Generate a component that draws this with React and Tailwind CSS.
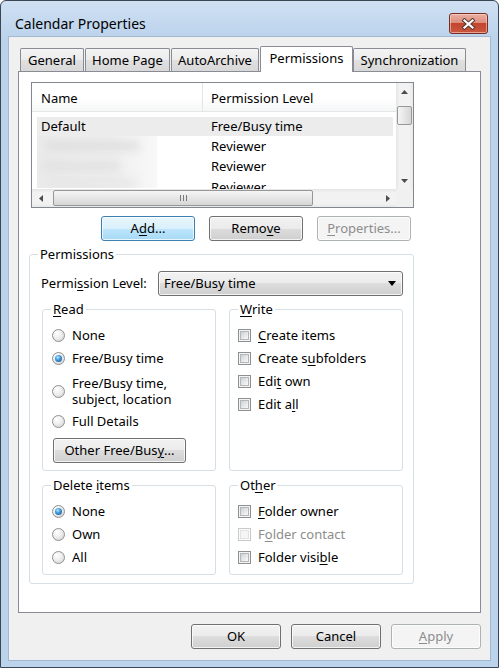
import React from "react";

const U = ({ children }) => (
  <span className="underline decoration-1 underline-offset-[2px]">{children}</span>
);

function Btn({ children, className = "", variant = "normal" }) {
  const styles =
    variant === "default"
      ? "border-[#3c7fb1] bg-[linear-gradient(180deg,#eaf6fd_0%,#d9f0fc_50%,#bee6fd_50%,#a7d9f5_100%)] text-black"
      : variant === "disabled"
      ? "border-[#adb2b5] bg-[#f4f4f4] text-[#8d8d8d]"
      : "border-[#707070] bg-[linear-gradient(180deg,#f2f2f2_0%,#ebebeb_50%,#dddddd_50%,#cfcfcf_100%)] text-black";
  return (
    <div
      className={`h-[25px] shrink-0 rounded-[3px] border shadow-[inset_0_0_0_1px_rgba(255,255,255,0.75)] flex items-center justify-center ${styles} ${className}`}
    >
      {children}
    </div>
  );
}

function Radio({ checked }) {
  return (
    <div className="w-[13px] h-[13px] shrink-0 rounded-full border border-[#8e8f8f] bg-[radial-gradient(circle_at_35%_30%,#ffffff_0%,#eeeeee_45%,#cfcfcf_100%)] flex items-center justify-center">
      {checked && (
        <div className="w-[7px] h-[7px] rounded-full bg-[radial-gradient(circle_at_40%_35%,#bfeaff_0%,#3e9be0_40%,#0d4f8c_100%)]" />
      )}
    </div>
  );
}

function Check({ disabled }) {
  return (
    <div
      className={`w-[13px] h-[13px] shrink-0 border p-[1px] ${
        disabled ? "border-[#c9c9c9] bg-[#fbfbfb]" : "border-[#8e8f8f] bg-[#f4f4f4]"
      }`}
    >
      <div
        className={`w-full h-full border ${
          disabled
            ? "border-[#e3e3e3] bg-[#f5f5f5]"
            : "border-[#b3b6ba] bg-[linear-gradient(135deg,#cdd0d4_0%,#e9eaec_60%,#f8f8f8_100%)]"
        }`}
      />
    </div>
  );
}

function Tab({ children, selected, className = "" }) {
  if (selected) {
    return (
      <div
        className={`relative z-10 -mb-[1px] h-[26px] border border-b-0 border-[#898c95] rounded-t-[2px] bg-white flex items-center justify-center pb-[2px] ${className}`}
      >
        {children}
      </div>
    );
  }
  return (
    <div
      className={`h-[23px] border border-b-0 border-[#898c95] rounded-t-[2px] bg-[linear-gradient(180deg,#f4f4f4_0%,#ececec_50%,#e0e0e0_50%,#d8d8d8_100%)] flex items-center justify-center pt-[1px] ${className}`}
    >
      {children}
    </div>
  );
}

function Group({ label, className = "", children }) {
  return (
    <fieldset className={`border border-[#d5dfe5] rounded-[3px] ${className}`}>
      <legend className="ml-[8px] px-[2px] leading-[16px]">{label}</legend>
      {children}
    </fieldset>
  );
}

function CloseBtn() {
  return (
    <div className="w-[39px] h-[21px] rounded-[3px] border border-[#7a2d24] bg-[linear-gradient(180deg,#e9b0a3_0%,#dc8f7d_45%,#c4442d_50%,#c9593f_100%)] shadow-[inset_0_0_0_1px_rgba(255,220,210,0.55)] flex items-center justify-center">
      <svg width="15" height="12" viewBox="0 0 15 12">
        <path d="M3.5 2.5 L11.5 9.5 M11.5 2.5 L3.5 9.5" stroke="#5a3a36" strokeWidth="4.2" strokeLinecap="square" />
        <path d="M3.5 2.5 L11.5 9.5 M11.5 2.5 L3.5 9.5" stroke="#ffffff" strokeWidth="2.2" strokeLinecap="square" />
      </svg>
    </div>
  );
}

function ArrowUp() {
  return (
    <svg width="7" height="4" viewBox="0 0 7 4">
      <path d="M0 4 L3.5 0 L7 4 Z" fill="#4d4d4d" />
    </svg>
  );
}
function ArrowDown() {
  return (
    <svg width="7" height="4" viewBox="0 0 7 4">
      <path d="M0 0 L3.5 4 L7 0 Z" fill="#4d4d4d" />
    </svg>
  );
}
function ArrowLeft() {
  return (
    <svg width="4" height="7" viewBox="0 0 4 7">
      <path d="M4 0 L0 3.5 L4 7 Z" fill="#4d4d4d" />
    </svg>
  );
}
function ArrowRight() {
  return (
    <svg width="4" height="7" viewBox="0 0 4 7">
      <path d="M0 0 L4 3.5 L0 7 Z" fill="#4d4d4d" />
    </svg>
  );
}

function ListView() {
  return (
    <div className="ml-[12px] mt-[10px] w-[383px] h-[126px] border border-[#828790] flex flex-col bg-white">
      <div className="flex h-[106px]">
        <div className="flex-1 flex flex-col overflow-hidden">
          <div className="h-[29px] shrink-0 flex border-b border-[#e5e5e5] bg-[linear-gradient(180deg,#ffffff_0%,#ffffff_55%,#f5f6f7_100%)]">
            <div className="w-[171px] pl-[9px] pt-[3px] flex items-center border-r border-[#e5e5e5]">Name</div>
            <div className="pl-[8px] pt-[3px] flex items-center">Permission Level</div>
          </div>
          <div className="flex-1 overflow-hidden">
            <div className="mt-[5px] ml-[5px] mr-[3px] h-[19px] bg-[#ececec] flex items-center">
              <div className="w-[166px] pl-[4px]">Default</div>
              <div className="pl-[8px]">Free/Busy time</div>
            </div>
            <div className="flex ml-[5px]">
              <div className="w-[166px]">
                <div className="w-[120px] h-[52px] overflow-hidden bg-[linear-gradient(90deg,#ebebeb_0%,#efefef_60%,#f8f8f8_100%)]">
                  <div className="mt-[6px] ml-[8px] w-[95px] h-[8px] rounded-full bg-[#dcdcdc] blur-[5px]" />
                  <div className="mt-[12px] ml-[4px] w-[80px] h-[8px] rounded-full bg-[#dfdfdf] blur-[5px]" />
                  <div className="mt-[10px] ml-[10px] w-[90px] h-[6px] rounded-full bg-[#e2e2e2] blur-[5px]" />
                </div>
              </div>
              <div className="flex flex-col pl-[8px]">
                <div className="h-[20px] flex items-center">Reviewer</div>
                <div className="h-[20px] flex items-center">Reviewer</div>
                <div className="h-[20px] flex items-center pt-[2px]">Reviewer</div>
              </div>
            </div>
          </div>
        </div>
        <div className="w-[17px] shrink-0 flex flex-col bg-[linear-gradient(90deg,#e5e5e5_0%,#f2f2f2_20%,#f2f2f2_80%,#e8e8e8_100%)]">
          <div className="h-[17px] flex items-center justify-center">
            <ArrowUp />
          </div>
          <div className="mt-[6px] mx-[1px] h-[19px] rounded-[2px] border border-[#979797] bg-[linear-gradient(90deg,#f5f5f5_0%,#e6e6e6_50%,#d6d6d6_100%)]" />
          <div className="flex-1" />
          <div className="h-[17px] flex items-center justify-center">
            <ArrowDown />
          </div>
        </div>
      </div>
      <div className="flex h-[18px]">
        <div className="flex-1 flex items-stretch bg-[linear-gradient(180deg,#e5e5e5_0%,#f2f2f2_20%,#f2f2f2_80%,#e8e8e8_100%)]">
          <div className="w-[17px] flex items-center justify-center">
            <ArrowLeft />
          </div>
          <div className="ml-[4px] my-[1px] w-[260px] rounded-[2px] border border-[#979797] bg-[linear-gradient(180deg,#f5f5f5_0%,#e6e6e6_50%,#d6d6d6_100%)] flex items-center justify-center gap-[2px]">
            <div className="w-[1px] h-[6px] bg-[#7a7a7a]" />
            <div className="w-[1px] h-[6px] bg-[#7a7a7a]" />
            <div className="w-[1px] h-[6px] bg-[#7a7a7a]" />
          </div>
          <div className="flex-1" />
          <div className="w-[17px] flex items-center justify-center">
            <ArrowRight />
          </div>
        </div>
        <div className="w-[17px] bg-[#f0f0f0]" />
      </div>
    </div>
  );
}

function RadioRow({ checked, children }) {
  return (
    <div className="h-[23px] flex items-center gap-[7px] pl-[9px]">
      <Radio checked={checked} />
      <span>{children}</span>
    </div>
  );
}

function CheckRow({ disabled, children }) {
  return (
    <div className={`h-[23px] flex items-center gap-[7px] pl-[8px] ${disabled ? "text-[#8d8d8d]" : ""}`}>
      <Check disabled={disabled} />
      <span>{children}</span>
    </div>
  );
}

export default function App() {
  return (
    <div className="w-[500px] h-[670px] bg-white font-['Noto_Sans','Open_Sans',sans-serif] text-[13px] text-black leading-none">
      <div className="w-[499px] h-[668px] rounded-t-[6px] border border-[#3a4653] bg-[linear-gradient(180deg,#cfe0f3_0px,#bcd3ec_36px,#bcd3ec_100%)] flex flex-col">
        <div className="h-[35px] shrink-0 pt-[12px] pl-[14px] pr-[10px] flex items-start justify-between">
          <div className="h-[21px] flex items-center text-[14px]">Calendar Properties</div>
          <CloseBtn />
        </div>
        <div className="mx-[7px] mb-[6px] flex-1 border border-[#a4b9d0] bg-[#f0f0f0] px-[9px] pt-[9px] flex flex-col">
          <div className="h-[25px] shrink-0 pl-[2px] flex items-end">
            <Tab className="w-[64px]">General</Tab>
            <Tab className="w-[85px] ml-[1px]">Home Page</Tab>
            <Tab className="w-[88px] ml-[1px]">AutoArchive</Tab>
            <Tab selected className="w-[93px] ml-[1px]">Permissions</Tab>
            <Tab className="w-[113px]">Synchronization</Tab>
          </div>
          <div className="h-[542px] shrink-0 border border-[#898c95] bg-white flex flex-col">
            <ListView />
            <div className="mt-[8px] ml-[82px] flex gap-[14px]">
              <Btn variant="default" className="w-[94px]">
                A<U>d</U>d...
              </Btn>
              <Btn className="w-[94px]">
                Remo<U>v</U>e
              </Btn>
              <Btn variant="disabled" className="w-[94px]">
                <U>P</U>roperties...
              </Btn>
            </div>
            <Group label="Permissions" className="mt-[5px] ml-[10px] w-[385px] h-[338px]">
              <div className="mt-[9px] h-[25px] flex items-center pl-[11px]">
                <div className="w-[117px]">
                  Permi<U>s</U>sion Level:
                </div>
                <div className="w-[245px] h-[25px] rounded-[3px] border border-[#707070] bg-[linear-gradient(180deg,#f2f2f2_0%,#ebebeb_50%,#dddddd_50%,#cfcfcf_100%)] shadow-[inset_0_0_0_1px_rgba(255,255,255,0.75)] flex items-center justify-between pl-[5px] pr-[6px]">
                  <span>Free/Busy time</span>
                  <svg width="8" height="5" viewBox="0 0 8 5">
                    <path d="M0 0 L8 0 L4 5 Z" fill="#000" />
                  </svg>
                </div>
              </div>
              <div className="mt-[5px] pl-[12px] grid grid-cols-[174px_174px] gap-x-[13px] gap-y-[6px]">
                <Group label={<><U>R</U>ead</>} className="h-[170px]">
                  <div className="pt-[7px]">
                    <RadioRow>None</RadioRow>
                    <RadioRow checked>Free/Busy time</RadioRow>
                    <div className="h-[40px] pt-[5px] pb-[3px] flex items-center gap-[7px] pl-[9px]">
                      <Radio />
                      <div className="leading-[16px]">
                        <div>Free/Busy time,</div>
                        <div>subject, location</div>
                      </div>
                    </div>
                    <RadioRow>Full Details</RadioRow>
                    <Btn className="mt-[5px] ml-[10px] w-[133px]">
                      Other Free/Bus<U>y</U>...
                    </Btn>
                  </div>
                </Group>
                <Group label={<><U>W</U>rite</>} className="h-[170px]">
                  <div className="pt-[7px]">
                    <CheckRow>
                      <U>C</U>reate items
                    </CheckRow>
                    <CheckRow>
                      Create s<U>u</U>bfolders
                    </CheckRow>
                    <CheckRow>
                      Edi<U>t</U> own
                    </CheckRow>
                    <CheckRow>
                      Edit a<U>l</U>l
                    </CheckRow>
                  </div>
                </Group>
                <Group label={<>Delete <U>i</U>tems</>} className="h-[98px]">
                  <div className="pt-[7px]">
                    <RadioRow checked>None</RadioRow>
                    <RadioRow>Own</RadioRow>
                    <RadioRow>All</RadioRow>
                  </div>
                </Group>
                <Group label={<>Ot<U>h</U>er</>} className="h-[98px]">
                  <div className="pt-[7px]">
                    <CheckRow>
                      <U>F</U>older owner
                    </CheckRow>
                    <CheckRow disabled>
                      F<U>o</U>lder contact
                    </CheckRow>
                    <CheckRow>
                      Folder visi<U>b</U>le
                    </CheckRow>
                  </div>
                </Group>
              </div>
            </Group>
          </div>
          <div className="mt-[11px] flex justify-end gap-[10px]">
            <Btn className="w-[90px]">OK</Btn>
            <Btn className="w-[90px]">Cancel</Btn>
            <Btn variant="disabled" className="w-[90px]">
              <U>A</U>pply
            </Btn>
          </div>
        </div>
      </div>
    </div>
  );
}
